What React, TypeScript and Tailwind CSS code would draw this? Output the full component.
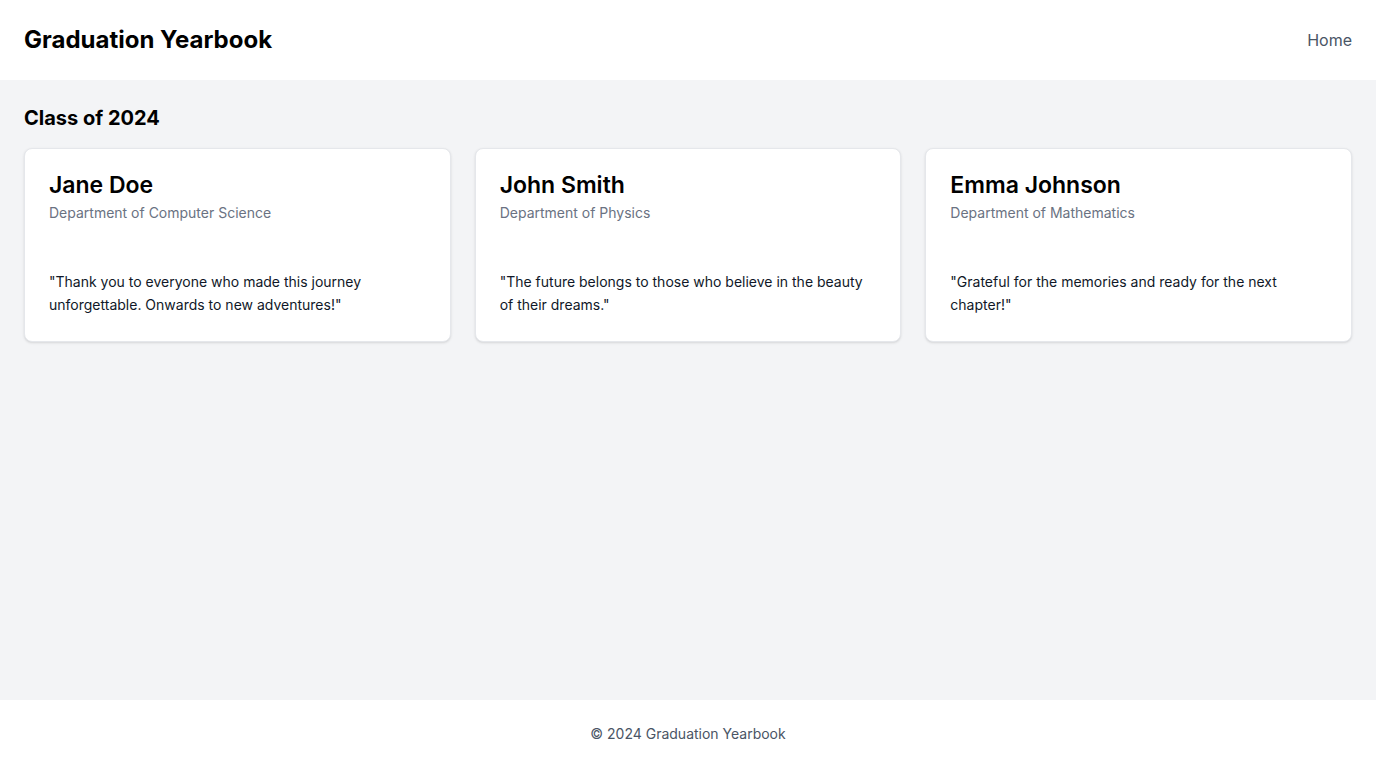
type Student = {
    name: string
    department: string
    quote: string
}

const students: Student[] = [
    {
        name: "Jane Doe",
        department: "Department of Computer Science",
        quote: "\"Thank you to everyone who made this journey unforgettable. Onwards to new adventures!\"",
    },
    {
        name: "John Smith",
        department: "Department of Physics",
        quote: "\"The future belongs to those who believe in the beauty of their dreams.\"",
    },
    {
        name: "Emma Johnson",
        department: "Department of Mathematics",
        quote: "\"Grateful for the memories and ready for the next chapter!\"",
    },
]

const StudentCard = ({ student }: { student: Student }) => {
    return (
        <div className="bg-white border border-gray-200 rounded-lg shadow-sm px-6 pt-[25px] pb-[25px]">
            <h3 className="text-[23px] font-semibold text-black leading-[22px]">{student.name}</h3>
            <p className="text-sm text-gray-500 leading-5 mt-[7px]">{student.department}</p>
            <p className="text-sm text-gray-900 leading-[23px] mt-[47px]">{student.quote}</p>
        </div>
    )
}

const App = () => {
    return (
        <div className="min-h-screen flex flex-col bg-gray-100 font-['Inter',sans-serif]">
            <header className="bg-white px-6 py-6 flex items-center justify-between">
                <h1 className="text-2xl font-bold text-black leading-8">Graduation Yearbook</h1>
                <nav>
                    <a href="#" className="text-base text-gray-600">Home</a>
                </nav>
            </header>

            <main className="flex-1 px-6 pt-6">
                <h2 className="text-xl font-bold text-black leading-7 mb-4">Class of 2024</h2>
                <div className="grid grid-cols-3 gap-6">
                    {students.map((s) => (
                        <StudentCard key={s.name} student={s} />
                    ))}
                </div>
            </main>

            <footer className="bg-white py-6 text-center">
                <p className="text-sm text-gray-600 leading-5">© 2024 Graduation Yearbook</p>
            </footer>
        </div>
    )
}

export default App
